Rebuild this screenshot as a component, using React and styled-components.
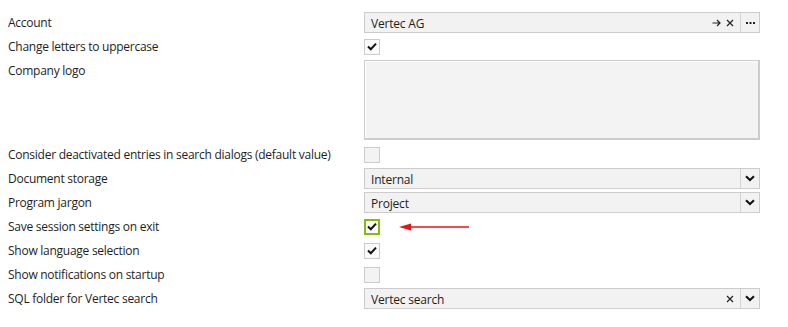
import React from "react";
import styled, { createGlobalStyle } from "styled-components";

const Global = createGlobalStyle`
  body {
    margin: 0;
    background: #fff;
    font-family: "Open Sans", "Noto Sans", sans-serif;
    font-size: 12px;
    color: #1e1e1e;
  }
`;

const Page = styled.div`
  position: relative;
  width: 788px;
  height: 327px;
  padding-top: 10px;
  box-sizing: border-box;
`;

const Row = styled.div`
  display: grid;
  grid-template-columns: 364px 396px;
  align-items: start;
  height: ${(p) => p.h || 24}px;
`;

const Label = styled.div`
  padding-left: 8px;
  padding-top: 1px;
  line-height: 24px;
  white-space: nowrap;
  letter-spacing: -0.26px;
`;

const Cell = styled.div`
  height: 100%;
  display: flex;
  align-items: ${(p) => (p.top ? "flex-start" : "center")};
  padding-top: ${(p) => (p.top ? 2 : 0)}px;
  box-sizing: border-box;
`;

const Field = styled.div`
  width: 396px;
  height: 21px;
  box-sizing: border-box;
  border: 1px solid #cccccc;
  background: #f2f2f2;
  display: flex;
  align-items: stretch;
`;

const Value = styled.div`
  flex: 1;
  padding-left: 6px;
  padding-top: 1px;
  line-height: 19px;
  letter-spacing: -0.2px;
`;

const Icon = styled.div`
  width: 13px;
  display: flex;
  align-items: center;
  justify-content: center;
`;

const Gap = styled.div`
  width: 4px;
`;

const Btn = styled.div`
  width: 18px;
  border-left: 1px solid #d4d4d4;
  display: flex;
  align-items: center;
  justify-content: center;
`;

const ImageBox = styled.div`
  width: 396px;
  height: 80px;
  box-sizing: border-box;
  border: 2px solid #cccccc;
  border-width: 1px 2px 2px 1px;
  background: #f3f3f3;
  box-shadow: inset 1px 1px 0 #fff;
`;

const Check = styled.div`
  width: 16px;
  height: 16px;
  box-sizing: border-box;
  border: ${(p) => (p.focus ? "2px solid #86b918" : "1px solid #cccccc")};
  background: ${(p) => (p.checked ? "#fafafa" : "#f3f3f3")};
  display: flex;
  align-items: center;
  justify-content: center;
`;

const Arrow = styled.svg`
  position: absolute;
  left: 399px;
  top: 222px;
`;

const Tick = () => (
  <svg width="10" height="9" viewBox="0 0 10 9">
    <path d="M1 4.5 L3.8 7.2 L9 1.6" fill="none" stroke="#111" strokeWidth="2" />
  </svg>
);

const Chevron = () => (
  <svg width="10" height="7" viewBox="0 0 10 7">
    <path d="M1 1.2 L5 5 L9 1.2" fill="none" stroke="#111" strokeWidth="2" />
  </svg>
);

const Cross = () => (
  <svg width="8" height="8" viewBox="0 0 8 8">
    <path d="M1 1 L7 7 M7 1 L1 7" stroke="#222" strokeWidth="1.2" />
  </svg>
);

const GoTo = () => (
  <svg width="9" height="8" viewBox="0 0 9 8">
    <path d="M0.5 4 H8 M5 1 L8 4 L5 7" fill="none" stroke="#222" strokeWidth="1.2" />
  </svg>
);

const Dots = () => (
  <svg width="9" height="3" viewBox="0 0 9 3">
    <rect x="0" y="1" width="2" height="2" fill="#222" />
    <rect x="3.5" y="1" width="2" height="2" fill="#222" />
    <rect x="7" y="1" width="2" height="2" fill="#222" />
  </svg>
);

const CheckBox = ({ checked, focus }) => (
  <Check checked={checked} focus={focus}>
    {checked && <Tick />}
  </Check>
);

export default function App() {
  return (
    <Page>
      <Global />
      <Row>
        <Label>Account</Label>
        <Cell>
          <Field>
            <Value>Vertec AG</Value>
            <Icon><GoTo /></Icon>
            <Icon><Cross /></Icon>
            <Gap />
            <Btn><Dots /></Btn>
          </Field>
        </Cell>
      </Row>
      <Row>
        <Label>Change letters to uppercase</Label>
        <Cell><CheckBox checked /></Cell>
      </Row>
      <Row h={84}>
        <Label>Company logo</Label>
        <Cell top><ImageBox /></Cell>
      </Row>
      <Row>
        <Label>Consider deactivated entries in search dialogs (default value)</Label>
        <Cell><CheckBox /></Cell>
      </Row>
      <Row>
        <Label>Document storage</Label>
        <Cell>
          <Field>
            <Value>Internal</Value>
            <Btn><Chevron /></Btn>
          </Field>
        </Cell>
      </Row>
      <Row>
        <Label>Program jargon</Label>
        <Cell>
          <Field>
            <Value>Project</Value>
            <Btn><Chevron /></Btn>
          </Field>
        </Cell>
      </Row>
      <Row>
        <Label>Save session settings on exit</Label>
        <Cell><CheckBox checked focus /></Cell>
      </Row>
      <Row>
        <Label>Show language selection</Label>
        <Cell><CheckBox checked /></Cell>
      </Row>
      <Row>
        <Label>Show notifications on startup</Label>
        <Cell><CheckBox /></Cell>
      </Row>
      <Row>
        <Label>SQL folder for Vertec search</Label>
        <Cell>
          <Field>
            <Value>Vertec search</Value>
            <Icon><Cross /></Icon>
            <Gap />
            <Btn><Chevron /></Btn>
          </Field>
        </Cell>
      </Row>
      <Arrow width="72" height="10" viewBox="0 0 72 10">
        <path d="M0 5 L12 1.5 L12 8.5 Z" fill="#ee1111" />
        <path d="M10 5 H70" stroke="#ee1111" strokeWidth="1.3" />
      </Arrow>
    </Page>
  );
}
